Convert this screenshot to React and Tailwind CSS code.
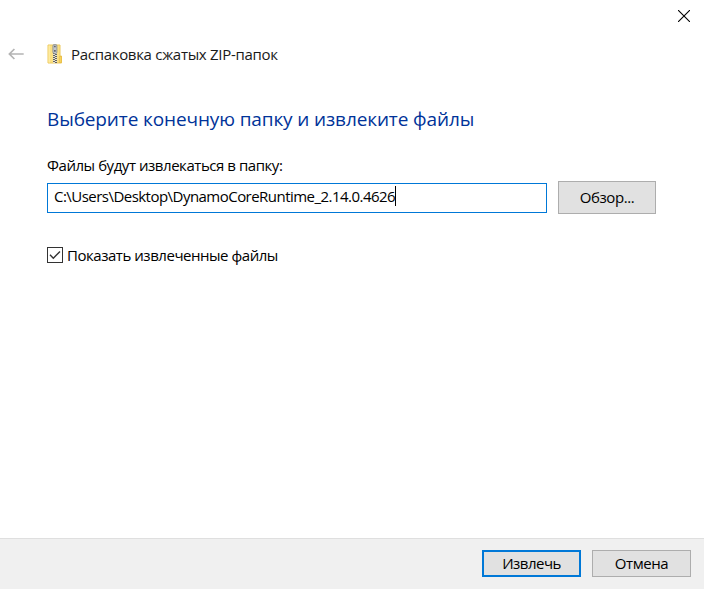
function BackArrow() {
  return (
    <svg width="16" height="12" viewBox="0 0 16 12" fill="none" stroke="#b4b4b4" strokeWidth="1.7" className="shrink-0">
      <path d="M15.7 6H1.4M6.4 1L1.4 6l5 5" />
    </svg>
  );
}

function ZipFolder() {
  return (
    <svg width="16" height="20" viewBox="0 0 16 20" className="shrink-0">
      <path d="M1 1h12v11h1.5v7H1z" fill="#fbe083" stroke="#ecc85c" />
      <path d="M1.5 1.5h1.5v17h-1.5z" fill="#fdeaa0" />
      <path d="M12.3 12.5h2v6h-2z" fill="#fbd75f" stroke="#e2b53c" strokeWidth=".6" />
      <path d="M8 8v11" stroke="#e9e3cc" strokeWidth="4" />
      <path d="M7 9v10" stroke="#5f6062" strokeWidth="2" strokeDasharray="1 1" />
      <path d="M9 10v9" stroke="#5f6062" strokeWidth="2" strokeDasharray="1 1" />
      <rect x="5.9" y=".5" width="4" height="9" rx="1.4" fill="#c3c7cc" stroke="#85898e" strokeWidth=".8" />
      <path d="M7.9 1.8v1.4M7.9 6v1.8" stroke="#45484c" strokeWidth="1.3" />
    </svg>
  );
}

function Button({ className, children }) {
  return (
    <button className={`flex shrink-0 items-center justify-center bg-[#e1e1e1] pb-0.5 ${className}`}>{children}</button>
  );
}

export default function App() {
  return (
    <div className="flex h-[589px] w-[704px] flex-col overflow-hidden bg-white font-['Open_Sans','Noto_Sans',sans-serif] text-[15px] leading-5 text-black">
      <div className="flex h-8 shrink-0 justify-end pt-[10px] pr-[14px]">
        <svg width="12" height="12" viewBox="0 0 12 12" stroke="#000" strokeWidth="1.1">
          <path d="M0 0l12 12M12 0L0 12" />
        </svg>
      </div>
      <header className="flex h-11 shrink-0 items-center pl-2">
        <BackArrow />
        <div className="ml-[23px] flex items-center gap-2">
          <ZipFolder />
          <span className="whitespace-nowrap text-[#1a1a1a] tracking-[-0.3px]">Распаковка сжатых ZIP-папок</span>
        </div>
      </header>
      <main className="flex grow flex-col items-start pt-[29px] pl-[47px]">
        <h1 className="h-7 text-[19px] leading-7 tracking-[-0.12px] whitespace-nowrap text-[#003399]">Выберите конечную папку и извлеките файлы</h1>
        <label className="mt-[22px] h-5 whitespace-nowrap tracking-[-0.45px]">Файлы будут извлекаться в папку:</label>
        <div className="mt-1.5 flex h-[33px] items-center gap-[11px]">
          <div className="flex h-[30px] w-[500px] items-center border border-[#0078d7] pb-1 pl-1.5">
            <span className="whitespace-nowrap tracking-[-0.53px]">C:\Users\Desktop\DynamoCoreRuntime_2.14.0.4626</span>
            <span className="h-5 w-px bg-black" />
          </div>
          <Button className="h-[33px] w-[98px] border border-[#adadad] tracking-[-0.45px]">Обзор...</Button>
        </div>
        <div className="mt-[31px] flex h-5 items-center gap-1">
          <span className="flex size-4 items-center justify-center border border-[#333]">
            <svg width="12" height="10" viewBox="0 0 12 10" fill="none" stroke="#333" strokeWidth="1.4">
              <path d="M1 4.8l3.3 3.4L11 1.4" />
            </svg>
          </span>
          <span className="whitespace-nowrap tracking-[-0.46px]">Показать извлеченные файлы</span>
        </div>
      </main>
      <footer className="flex h-[51px] shrink-0 justify-end gap-[11px] border-t border-[#dfdfdf] bg-[#f0f0f0] pt-[11px] pr-[13px]">
        <Button className="h-[27px] w-[99px] border-2 border-[#0078d7] tracking-[-0.5px]">Извлечь</Button>
        <Button className="h-[27px] w-[99px] border border-[#adadad] tracking-[-0.4px]">Отмена</Button>
      </footer>
    </div>
  );
}
